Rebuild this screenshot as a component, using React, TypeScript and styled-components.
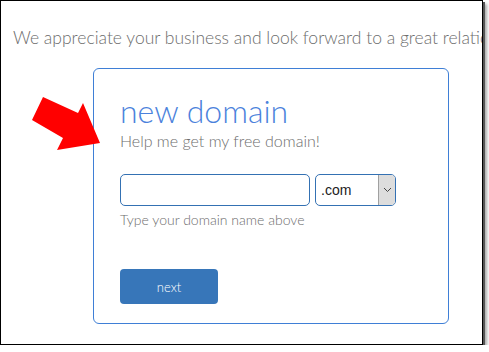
import React from "react";
import styled, { createGlobalStyle } from "styled-components";

const GlobalStyle = createGlobalStyle`
  html, body {
    margin: 0;
    padding: 0;
    background: #ffffff;
  }
  body {
    font-family: Lato, "Open Sans", sans-serif;
  }
`;

const uiColors = {
  frame: "#000000",
  cardBorder: "#3f7fd6",
  title: "#4b82dc",
  text: "#6d6d6d",
  button: "#3776b9",
  field: "#3471b3",
};

export default function App() {
  return (
    <>
      <GlobalStyle />
      <Frame>
        <Intro>
          We appreciate your business and look forward to a great relationship
        </Intro>
        <Stage>
          <Arrow viewBox="0 0 72 58" aria-hidden="true">
            <polygon points="13,2 48,18 53,8 70,48 27,55 33,43 2,25" fill="#ff0000" />
          </Arrow>
          <Card>
            <Title>new domain</Title>
            <Subtitle>Help me get my free domain!</Subtitle>
            <FieldRow>
              <DomainInput type="text" />
              <TldSelect>
                <TldValue>.com</TldValue>
                <TldArrow>
                  <svg width="9" height="6" viewBox="0 0 9 6" aria-hidden="true">
                    <polyline points="1,1 4.5,4.5 8,1" fill="none" stroke="#444" strokeWidth="1" />
                  </svg>
                </TldArrow>
              </TldSelect>
            </FieldRow>
            <Hint>Type your domain name above</Hint>
            <NextButton>next</NextButton>
          </Card>
        </Stage>
      </Frame>
    </>
  );
}

const Frame = styled.div`
  width: 481px;
  height: 343px;
  border: 1px solid ${uiColors.frame};
  box-shadow: 2px 2px 0 #555, 4px 4px 3px #aaa;
  overflow: hidden;
  background: #fff;
`;

const Intro = styled.div`
  margin: 25px 0 0 12px;
  font-size: 17.5px;
  font-weight: 300;
  color: ${uiColors.text};
  white-space: nowrap;
  line-height: 24px;
`;

const Stage = styled.div`
  position: relative;
  margin: 18px 0 0 92px;
`;

const Arrow = styled.svg`
  position: absolute;
  left: -63px;
  top: 27px;
  width: 72px;
  height: 58px;
  overflow: visible;
`;

const Card = styled.div`
  width: 328px;
  height: 254px;
  border: 1px solid ${uiColors.cardBorder};
  border-radius: 6px;
  padding: 0 0 0 26px;
`;

const Title = styled.div`
  margin-top: 22px;
  font-size: 32px;
  font-weight: 300;
  color: ${uiColors.title};
  line-height: 40px;
`;

const Subtitle = styled.div`
  margin-top: 0;
  font-size: 16px;
  font-weight: 300;
  color: ${uiColors.text};
  line-height: 20px;
`;

const FieldRow = styled.div`
  display: flex;
  gap: 5px;
  margin-top: 23px;
`;

const DomainInput = styled.input`
  width: 190px;
  height: 32px;
  box-sizing: border-box;
  border: 1px solid ${uiColors.field};
  border-radius: 5px;
  outline: none;
  padding: 0 8px;
`;

const TldSelect = styled.div`
  display: flex;
  width: 81px;
  height: 32px;
  box-sizing: border-box;
  border: 1px solid ${uiColors.field};
  border-radius: 5px;
  overflow: hidden;
`;

const TldValue = styled.div`
  flex: 1;
  display: flex;
  align-items: center;
  padding-left: 5px;
  font-family: "Liberation Sans", Arial, sans-serif;
  font-size: 14px;
  color: #222;
`;

const TldArrow = styled.div`
  width: 16px;
  display: flex;
  align-items: center;
  justify-content: center;
  background: #dddddd;
  border-left: 1px solid #a0a0a0;
`;

const Hint = styled.div`
  margin-top: 5px;
  font-size: 14px;
  font-weight: 300;
  color: ${uiColors.text};
  line-height: 18px;
`;

const NextButton = styled.button`
  display: block;
  margin-top: 40px;
  width: 98px;
  height: 35px;
  border: none;
  border-radius: 4px;
  background: ${uiColors.button};
  color: #fff;
  font-family: Lato, sans-serif;
  font-weight: 300;
  font-size: 13px;
  cursor: pointer;
`;
